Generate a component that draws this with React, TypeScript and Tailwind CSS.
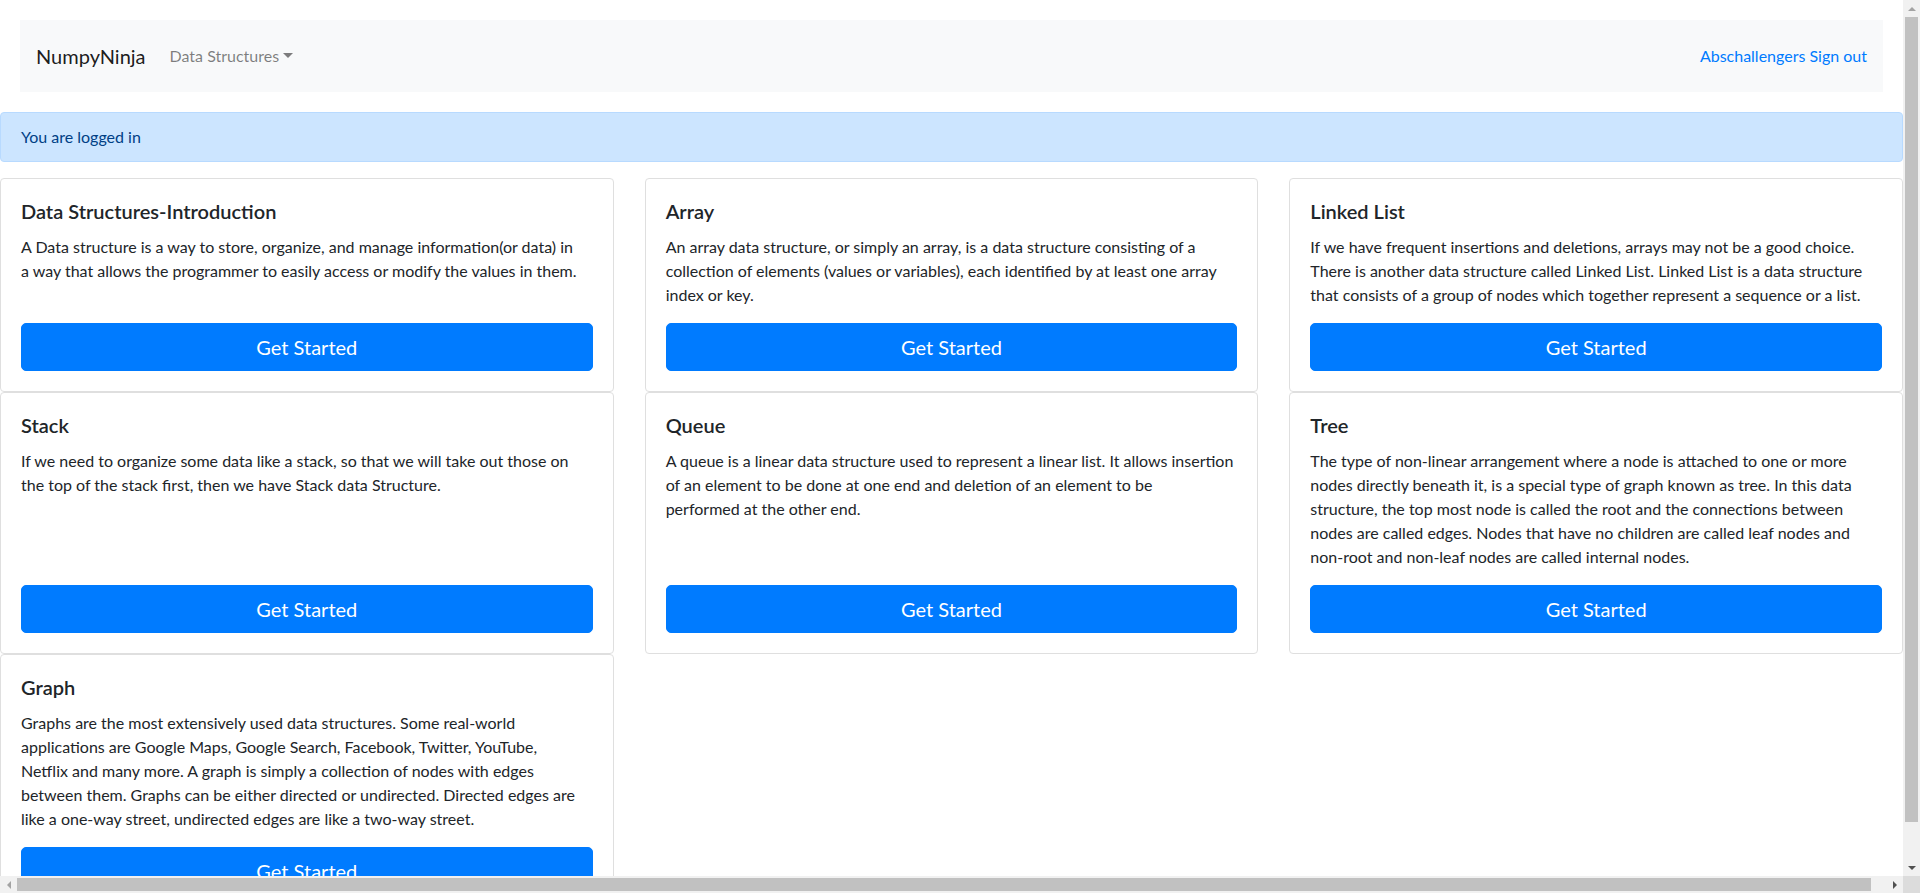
import React from 'react';

interface Topic {
  title: string;
  lines: string[];
}

const topics: Topic[] = [
  {
    title: 'Data Structures-Introduction',
    lines: [
      'A Data structure is a way to store, organize, and manage information(or data) in',
      'a way that allows the programmer to easily access or modify the values in them.',
    ],
  },
  {
    title: 'Array',
    lines: [
      'An array data structure, or simply an array, is a data structure consisting of a',
      'collection of elements (values or variables), each identified by at least one array',
      'index or key.',
    ],
  },
  {
    title: 'Linked List',
    lines: [
      'If we have frequent insertions and deletions, arrays may not be a good choice.',
      'There is another data structure called Linked List. Linked List is a data structure',
      'that consists of a group of nodes which together represent a sequence or a list.',
    ],
  },
  {
    title: 'Stack',
    lines: [
      'If we need to organize some data like a stack, so that we will take out those on',
      'the top of the stack first, then we have Stack data Structure.',
    ],
  },
  {
    title: 'Queue',
    lines: [
      'A queue is a linear data structure used to represent a linear list. It allows insertion',
      'of an element to be done at one end and deletion of an element to be',
      'performed at the other end.',
    ],
  },
  {
    title: 'Tree',
    lines: [
      'The type of non-linear arrangement where a node is attached to one or more',
      'nodes directly beneath it, is a special type of graph known as tree. In this data',
      'structure, the top most node is called the root and the connections between',
      'nodes are called edges. Nodes that have no children are called leaf nodes and',
      'non-root and non-leaf nodes are called internal nodes.',
    ],
  },
  {
    title: 'Graph',
    lines: [
      'Graphs are the most extensively used data structures. Some real-world',
      'applications are Google Maps, Google Search, Facebook, Twitter, YouTube,',
      'Netflix and many more. A graph is simply a collection of nodes with edges',
      'between them. Graphs can be either directed or undirected. Directed edges are',
      'like a one-way street, undirected edges are like a two-way street.',
    ],
  },
];

const TopicCard: React.FC<{ topic: Topic }> = ({ topic }) => (
  <div className="flex flex-col bg-white border border-[#dfdfdf] rounded-[4px] p-5">
    <h5 className="text-[20px] leading-[24px] font-semibold text-[#212529] mb-3">{topic.title}</h5>
    <p className="text-[16px] leading-[24px] text-[#212529] mb-4 flex-1 whitespace-nowrap">
      {topic.lines.map((line, i) => (
        <React.Fragment key={i}>
          {line}
          {i < topic.lines.length - 1 && <br />}
        </React.Fragment>
      ))}
    </p>
    <a
      href="#"
      className="block w-full text-center bg-[#007bff] text-white text-[20px] leading-[30px] py-2 px-4 rounded-[5px] border border-[#007bff]"
    >
      Get Started
    </a>
  </div>
);

// browser scrollbar chrome (the reference shows a page scrolled in a classic window)
const VerticalScrollbar = () => (
  <div className="w-[17px] flex flex-col bg-[#f1f1f1] shrink-0">
    <div className="h-[17px] flex items-center justify-center">
      <span className="block border-x-[4px] border-x-transparent border-b-[4px] border-b-[#a3a3a3]" />
    </div>
    <div className="flex-1 px-[2px]">
      <div className="h-[805px] bg-[#c1c1c1]" />
    </div>
    <div className="h-[17px] flex items-center justify-center">
      <span className="block border-x-[4px] border-x-transparent border-t-[4px] border-t-[#505050]" />
    </div>
  </div>
);

const HorizontalScrollbar = () => (
  <div className="h-[17px] flex bg-[#f1f1f1] shrink-0">
    <div className="w-[17px] flex items-center justify-center">
      <span className="block border-y-[4px] border-y-transparent border-r-[4px] border-r-[#a3a3a3]" />
    </div>
    <div className="flex-1 py-[2px]">
      <div className="w-[1854px] h-full bg-[#c1c1c1]" />
    </div>
    <div className="w-[17px] flex items-center justify-center">
      <span className="block border-y-[4px] border-y-transparent border-l-[4px] border-l-[#505050]" />
    </div>
    <div className="w-[17px] bg-[#dcdcdc]" />
  </div>
);

export default function App() {
  return (
    <div className="h-[893px] w-full flex flex-col overflow-hidden bg-white font-['Lato','Liberation_Sans',sans-serif]">
      <div className="flex flex-1 min-h-0">
        <div className="flex-1 min-w-0 overflow-hidden">
          {/* navbar */}
          <div className="p-5">
            <nav className="flex items-center justify-between h-[72px] bg-[#f8f9fa] px-4">
              <div className="flex items-center">
                <a href="#" className="text-[20px] leading-[30px] text-black/90 mr-4">NumpyNinja</a>
                <a href="#" className="px-2 text-[16px] leading-[24px] text-black/50">
                  Data Structures
                  <span className="inline-block ml-[4px] align-[4px] border-x-[5px] border-x-transparent border-t-[5px] border-t-current" />
                </a>
              </div>
              <div className="text-[16px] leading-[24px] text-[#007bff]">
                <a href="#">Abschallengers</a> <a href="#">Sign out</a>
              </div>
            </nav>
          </div>

          {/* alert */}
          <div className="bg-[#cce5ff] border border-[#b8daff] text-[#004085] rounded-[4px] px-5 py-3 text-[16px] leading-[24px] mb-4">
            You are logged in
          </div>

          {/* cards */}
          <div className="grid grid-cols-3 gap-x-[31px]">
            {topics.map(t => (
              <TopicCard key={t.title} topic={t} />
            ))}
          </div>
        </div>
        <VerticalScrollbar />
      </div>
      <HorizontalScrollbar />
    </div>
  );
}
